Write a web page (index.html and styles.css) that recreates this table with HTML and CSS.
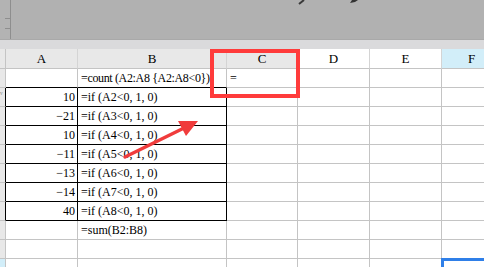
FILE: index.html
```html
<!DOCTYPE html>
<html>
<head>
<meta charset="utf-8">
<link rel="stylesheet" href="styles.css">
</head>
<body>
<div class="page">
  <div class="topbar">
    <div class="ruler"><span class="tick t1"></span><span class="tick t2"></span></div>
    <div class="photo">
      <svg class="marks" width="484" height="12" viewBox="0 0 484 12">
        <path d="M299 4 L304 0" stroke="#3a3a3a" stroke-width="2" fill="none"/>
        <path d="M350 3 L352 0 L358 0 L355 2 Z" fill="#333"/>
      </svg>
    </div>
  </div>
  <div class="band"></div>
  <div class="sheet">
    <div class="c rh hd"></div>
    <div class="c ch gray">A</div>
    <div class="c ch gray">B</div>
    <div class="c ch gray">C</div>
    <div class="c ch">D</div>
    <div class="c ch">E</div>
    <div class="c ch blue">F</div>

    <div class="c rh"></div>
    <div class="c tb-top"></div>
    <div class="c tb-top txt tight">=count (A2:A8 {A2:A8&lt;0})</div>
    <div class="c txt">=</div>
    <div class="c"></div><div class="c"></div><div class="c"></div>

    <div class="c rh tb-left"><span class="dot">ᵥ</span></div>
    <div class="c tb num">10</div><div class="c tb txt">=if (A2&lt;0, 1, 0)</div>
    <div class="c"></div><div class="c"></div><div class="c"></div><div class="c"></div>

    <div class="c rh tb-left"></div>
    <div class="c tb num">−21</div><div class="c tb txt">=if (A3&lt;0, 1, 0)</div>
    <div class="c"></div><div class="c"></div><div class="c"></div><div class="c"></div>

    <div class="c rh tb-left"></div>
    <div class="c tb num">10</div><div class="c tb txt">=if (A4&lt;0, 1, 0)</div>
    <div class="c"></div><div class="c"></div><div class="c"></div><div class="c"></div>

    <div class="c rh tb-left"></div>
    <div class="c tb num">−11</div><div class="c tb txt">=if (A5&lt;0, 1, 0)</div>
    <div class="c"></div><div class="c"></div><div class="c"></div><div class="c"></div>

    <div class="c rh tb-left"></div>
    <div class="c tb num">−13</div><div class="c tb txt">=if (A6&lt;0, 1, 0)</div>
    <div class="c"></div><div class="c"></div><div class="c"></div><div class="c"></div>

    <div class="c rh tb-left"></div>
    <div class="c tb num">−14</div><div class="c tb txt">=if (A7&lt;0, 1, 0)</div>
    <div class="c"></div><div class="c"></div><div class="c"></div><div class="c"></div>

    <div class="c rh tb-left"></div>
    <div class="c tb num">40</div><div class="c tb txt">=if (A8&lt;0, 1, 0)</div>
    <div class="c"></div><div class="c"></div><div class="c"></div><div class="c"></div>

    <div class="c rh"></div>
    <div class="c"></div><div class="c txt">=sum(B2:B8)</div>
    <div class="c"></div><div class="c"></div><div class="c"></div><div class="c"></div>

    <div class="c rh"></div>
    <div class="c"></div><div class="c"></div>
    <div class="c"></div><div class="c"></div><div class="c"></div><div class="c"></div>

    <div class="c rh rblue"></div>
    <div class="c"></div><div class="c"></div>
    <div class="c"></div><div class="c"></div><div class="c"></div><div class="c sel"></div>
  </div>

  <div class="redbox"></div>
  <svg class="arrow" width="484" height="267" viewBox="0 0 484 267">
    <path d="M125 157 L184 128" stroke="#f03c3c" stroke-width="3.5" stroke-linecap="round" fill="none"/>
    <path d="M198 121 L178 121 L186 136 Z" fill="#f03c3c"/>
  </svg>
</div>
</body>
</html>
```
FILE: styles.css
```css
* { box-sizing: border-box; }
html, body { margin: 0; padding: 0; }
body { width: 484px; height: 267px; overflow: hidden; background: #fff; }
.page { position: relative; width: 484px; height: 267px; overflow: hidden; }

.topbar { display: flex; height: 39px; background: #b1b1b1; }
.ruler { position: relative; width: 11px; border-right: 1px solid #8e8e8e; background: #b3b3b3; }
.tick { position: absolute; left: 5px; width: 5px; height: 1px; background: #8e8e8e; }
.t1 { top: 18px; }
.t2 { top: 28px; }
.photo { position: relative; flex: 1; }
.marks { position: absolute; left: -11px; top: 0; }

.band { height: 10px; background: #dadadc; border-top: 1px solid #a9a9a9; }

.sheet {
  display: grid;
  grid-template-columns: 6px 72px 149px 71px 72px 72px 60px;
  grid-template-rows: 20px repeat(11, 19px);
  font-family: "Liberation Serif", "DejaVu Serif", serif;
  font-size: 12px;
  color: #000;
}
.c {
  border-right: 1px solid #c4c4c4;
  border-bottom: 1px solid #c4c4c4;
  white-space: nowrap;
  overflow: visible;
  line-height: 18px;
}
.ch {
  text-align: center;
  font-family: "Liberation Serif", "DejaVu Serif", serif;
  font-size: 13px;
  line-height: 20px;
  border-right-color: #d4d4d4;
}
.gray { background: #e8e8e8; }
.blue { background: #d2eef9; }
.hd { background: #e8e8e8; }
.rh { background: #e8e8e8; position: relative; }
.rblue { background: #d2eef9; }
.txt { padding-left: 3px; }
.tight { letter-spacing: -0.35px; }
.num { text-align: right; padding-right: 2px; }
.tb-top { border-bottom-color: #000; }
.tb-left { border-right-color: #000; }
.tb { border-right-color: #000; border-bottom-color: #000; }
.dot { position: absolute; left: 0; top: -6px; font-size: 9px; color: #888; }
.sel { border-top: 3px solid #2f7fe8; border-left: 3px solid #2f7fe8; margin-left: -1px; margin-top: -1px; }

.redbox {
  position: absolute;
  left: 210px;
  top: 49px;
  width: 90px;
  height: 49px;
  border: 4px solid #ff3b3b;
}
.arrow { position: absolute; left: 0; top: 0; pointer-events: none; }
```
